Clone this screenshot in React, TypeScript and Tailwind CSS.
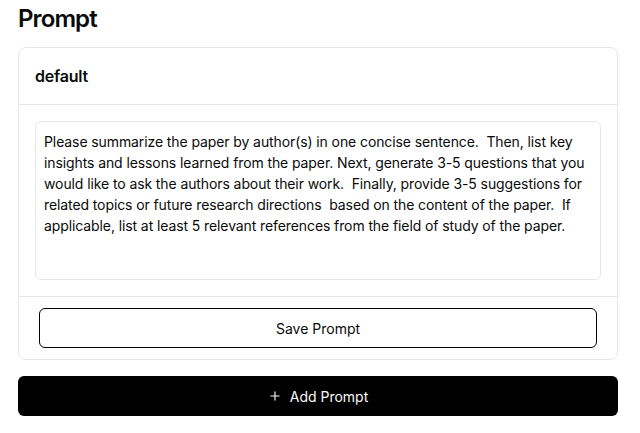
import React from "react";

const text =
  "Please summarize the paper by author(s) in one concise sentence.  Then, list key insights and lessons learned from the paper. Next, generate 3-5 questions that you would like to ask the authors about their work.  Finally, provide 3-5 suggestions for related topics or future research directions  based on the content of the paper.  If applicable, list at least 5 relevant references from the field of study of the paper.";

export default function App() {
  return (
    <div
      className="w-[640px] h-[433px] bg-white pl-[18px] pr-[22px] text-[#0a0a0a]"
      style={{ fontFamily: "Inter, 'Liberation Sans', sans-serif" }}
    >
      <h1 className="text-[24px] leading-[38px] font-semibold tracking-[-0.9px] mb-[9px]">Prompt</h1>
      <div className="rounded-lg border border-[#e5e7eb] bg-white">
        <div className="px-4 py-4 border-b border-[#e5e7eb]">
          <div className="text-[16px] leading-6 font-semibold tracking-[-0.2px]">default</div>
        </div>
        <div className="p-4">
          <textarea
            readOnly
            value={text}
            className="block w-full h-[159px] resize-none rounded-md border border-[#e5e7eb] pl-2 pr-[2px] py-[9px] text-[14px] leading-[21px] tracking-[-0.1px] text-[#0a0a0a] outline-none whitespace-pre-wrap"
            style={{ fontFamily: "Inter, 'Liberation Sans', sans-serif" }}
          />
        </div>
        <div className="border-t border-[#e5e7eb] px-5 pt-[11px] pb-[11px]">
          <button className="w-full h-10 rounded-md border border-black bg-white text-[14px] text-[#0a0a0a]">
            Save Prompt
          </button>
        </div>
      </div>
      <button className="mt-4 w-full h-10 rounded-md bg-black text-[#fafafa] text-[14px] flex items-center justify-center gap-2">
        <svg width="14" height="14" viewBox="0 0 24 24" fill="none" stroke="currentColor" strokeWidth="2" strokeLinecap="round">
          <path d="M12 5v14M5 12h14" />
        </svg>
        Add Prompt
      </button>
    </div>
  );
}
